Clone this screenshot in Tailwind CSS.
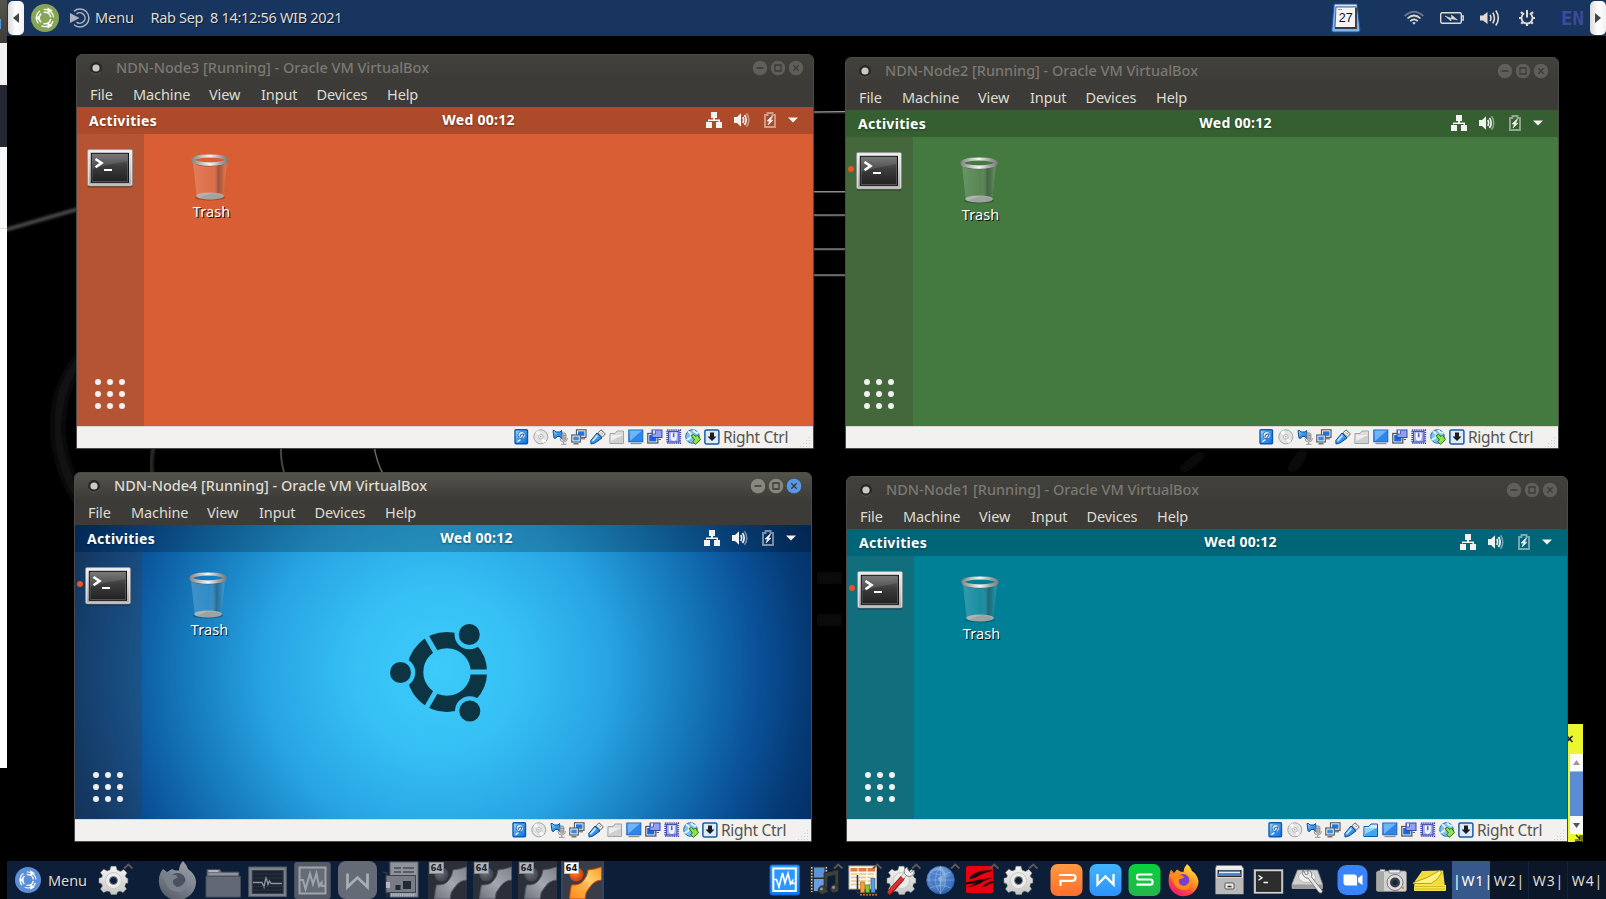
<!DOCTYPE html>
<html lang="en">
<head>
<meta charset="utf-8">
<title>Desktop</title>
<script src="https://cdn.jsdelivr.net/npm/@tailwindcss/browser@4"></script>
</head>
<body class="bg-black overflow-hidden">

<!-- Shared gradients and icon symbols -->
<svg width="0" height="0" class="absolute">
  <defs>
    <linearGradient id="g-blue" x1="0" y1="0" x2="1" y2="1"><stop offset="0" stop-color="#a9dbfb"/><stop offset=".5" stop-color="#3d99ec"/><stop offset="1" stop-color="#0b6fe0"/></linearGradient>
    <linearGradient id="g-steel" x1="0" y1="0" x2="0" y2="1"><stop offset="0" stop-color="#f4f4f4"/><stop offset="1" stop-color="#a9a9a9"/></linearGradient>
    <linearGradient id="g-screen" x1="0" y1="0" x2="0" y2="1"><stop offset="0" stop-color="#6a6a6a"/><stop offset=".45" stop-color="#3c3c3c"/><stop offset="1" stop-color="#222"/></linearGradient>
    <linearGradient id="g-rim" x1="0" y1="0" x2="1" y2="0"><stop offset="0" stop-color="#8b8b8b"/><stop offset=".2" stop-color="#b5b5b0"/><stop offset=".5" stop-color="#f6f6f6"/><stop offset=".8" stop-color="#a5a5a5"/><stop offset="1" stop-color="#808080"/></linearGradient>
    <linearGradient id="g-glass" x1="0" y1="0" x2="1" y2="0"><stop offset="0" stop-color="#fff" stop-opacity=".2"/><stop offset=".55" stop-color="#fff" stop-opacity=".1"/><stop offset=".75" stop-color="#444" stop-opacity=".38"/><stop offset=".85" stop-color="#666" stop-opacity=".25"/><stop offset="1" stop-color="#fff" stop-opacity=".15"/></linearGradient>
    <linearGradient id="g-orange" x1="0" y1="1" x2="1" y2="0"><stop offset="0" stop-color="#ff8a1c"/><stop offset=".45" stop-color="#ffb347"/><stop offset=".6" stop-color="#ffd070"/><stop offset="1" stop-color="#ff9c1e"/></linearGradient>
    <linearGradient id="g-gray" x1="0" y1="1" x2="1" y2="0"><stop offset="0" stop-color="#6d727b"/><stop offset=".5" stop-color="#a3a8b0"/><stop offset="1" stop-color="#7d828b"/></linearGradient>
    <linearGradient id="g-gear" x1="0" y1="0" x2="0" y2="1"><stop offset="0" stop-color="#f4f4f2"/><stop offset="1" stop-color="#c6c8c6"/></linearGradient>
    <linearGradient id="g-vb" x1="0" y1="0" x2="0" y2="1"><stop offset="0" stop-color="#3aa5ff"/><stop offset="1" stop-color="#1279ee"/></linearGradient>
    <linearGradient id="g-p" x1="0" y1="0" x2="0" y2="1"><stop offset="0" stop-color="#ff9a42"/><stop offset="1" stop-color="#ff6e2e"/></linearGradient>
    <linearGradient id="g-w" x1="0" y1="0" x2="0" y2="1"><stop offset="0" stop-color="#42b4fb"/><stop offset="1" stop-color="#2e92ff"/></linearGradient>
    <linearGradient id="g-s" x1="0" y1="0" x2="0" y2="1"><stop offset="0" stop-color="#05d23c"/><stop offset="1" stop-color="#26b54c"/></linearGradient>
    <linearGradient id="g-ff" x1=".8" y1="0" x2=".2" y2="1"><stop offset="0" stop-color="#fff04a"/><stop offset=".4" stop-color="#ff9a1e"/><stop offset=".75" stop-color="#ff3b46"/><stop offset="1" stop-color="#e31587"/></linearGradient>
    <linearGradient id="g-ffg" x1=".8" y1="0" x2=".2" y2="1"><stop offset="0" stop-color="#9ba1aa"/><stop offset=".5" stop-color="#7c828c"/><stop offset="1" stop-color="#555b67"/></linearGradient>
    <radialGradient id="g-globe" cx=".4" cy=".3" r=".7"><stop offset="0" stop-color="#9cc4f0"/><stop offset="1" stop-color="#2e63b2"/></radialGradient>
    <radialGradient id="g-ballr" cx=".4" cy=".4" r=".6"><stop offset="0" stop-color="#ff7d2a"/><stop offset="1" stop-color="#d93a00"/></radialGradient>
    <radialGradient id="g-ballg" cx=".4" cy=".4" r=".6"><stop offset="0" stop-color="#6a6f78"/><stop offset="1" stop-color="#3f444d"/></radialGradient>
    <filter id="f-soft" x="-50%" y="-50%" width="200%" height="200%"><feGaussianBlur stdDeviation="1.6"/></filter>
    <filter id="f-wide" x="-80%" y="-50%" width="260%" height="200%"><feGaussianBlur stdDeviation="5"/></filter>
    <mask id="m-cof">
      <circle cx="50" cy="50" r="31.900" fill="none" stroke="#fff" stroke-width="16.400"/>
      <g stroke="#000" stroke-width="5"><path d="M50 50H95M50 50L27.500 11.030M50 50L27.500 88.970"/></g>
      <circle cx="3.500" cy="50.500" r="14.800" fill="#000"/><circle cx="72.300" cy="12.500" r="14.800" fill="#000"/><circle cx="72.800" cy="89" r="14.800" fill="#000"/>
    </mask>
  </defs>

  <symbol id="cof" viewBox="-10 -5 110 110">
    <rect x="-10" y="-5" width="110" height="110" fill="#0d3442" mask="url(#m-cof)"/>
    <g fill="#0d3442"><circle cx="3.500" cy="50.500" r="10.500"/><circle cx="72.300" cy="12.500" r="10.500"/><circle cx="72.800" cy="89" r="10.500"/></g>
  </symbol>

  <symbol id="mate" viewBox="0 0 28 28">
    <circle cx="14" cy="14" r="14" fill="currentColor"/>
    <g fill="none" stroke="#fff">
      <circle cx="14" cy="14" r="8.600" stroke-width="1.300" stroke-dasharray="14 4" stroke-dashoffset="-3"/>
      <circle cx="14" cy="14" r="5.800" stroke-width="1.500" stroke-dasharray="9.500 2.600" stroke-dashoffset="-1"/>
    </g>
    <path d="M4 14L9 11.200V16.800ZM16.500 3.500L21.500 6.600L16.500 9.400ZM16.500 18.600L21.500 21.600L16.500 24.500Z" fill="#fff"/>
  </symbol>

  <symbol id="terminal" viewBox="0 0 46 39">
    <rect x=".5" y="1" width="45" height="37.500" rx="1.500" fill="#000" opacity=".35"/>
    <rect x=".5" y=".5" width="45" height="36.500" rx="1.500" fill="url(#g-steel)" stroke="#8e8e8e" stroke-width=".6"/>
    <rect x="1.500" y="1.500" width="43" height="34.500" rx="1" fill="none" stroke="#e4e4e4" stroke-width=".8"/>
    <rect x="3.800" y="3.800" width="38.200" height="30" fill="#0b0b0b"/>
    <rect x="5" y="5" width="35.800" height="27.500" fill="url(#g-screen)" stroke="#7c7c7c" stroke-width=".6"/>
    <path d="M5.500 5.500H40.500V12Q22 15 5.500 20Z" fill="#fff" opacity=".1"/>
    <path d="M8.500 10L14.500 14L8.500 18.300" fill="none" stroke="#fff" stroke-width="2.600"/>
    <path d="M17 21H25" stroke="#fff" stroke-width="2"/>
  </symbol>

  <symbol id="trash" viewBox="0 0 38 47">
    <ellipse cx="19" cy="43.500" rx="15" ry="3" fill="#000" opacity=".25"/>
    <path d="M2 8L5.500 41Q19 48 32.500 41L36 8Z" fill="url(#g-glass)"/>
    <ellipse cx="19" cy="42" rx="13.800" ry="3.600" fill="#b5b9b6" opacity=".92"/>
    <path d="M9 44Q18 38 26 39.500L32 42Q30 46 19 45.500Z" fill="#888" opacity=".35"/>
    <ellipse cx="19" cy="6" rx="17" ry="4" fill="none" stroke="url(#g-rim)" stroke-width="3.200"/>
    <path d="M1 6.500Q3 12 19 12T37 6.500" fill="none" stroke="#5d5d5d" stroke-width=".8"/>
    <path d="M1.500 7Q6 10.500 19 10.500T36.500 7" fill="none" stroke="url(#g-rim)" stroke-width="2.600"/>
  </symbol>

  <symbol id="net" viewBox="0 0 16 16"><path fill="currentColor" d="M5 0h6v6H9v1.500h5V10h2v6h-6v-6h2.500V9h-10v1H6v6H0v-6h2V7.500h5V6H5z"/></symbol>
  <symbol id="vol" viewBox="0 0 16 16"><path fill="currentColor" d="M0 5H3L7 1.200V14.800L3 11H0Z"/><g fill="none" stroke="currentColor"><path d="M8.800 5Q10.600 8 8.800 11" stroke-width="1.600"/><path d="M10.500 3Q13.800 8 10.500 13" stroke-width="1.700"/><path class="opacity-(--wave)" d="M12.600 1.200Q17 8 12.600 14.800" stroke-width="1.600"/></g></symbol>
  <symbol id="bat" viewBox="0 0 12 16"><path d="M1 3H3.500V1H8.500V3H11V15H1Z" fill="none" stroke="currentColor" stroke-width="1.900" opacity=".5"/><path d="M7.500 4.500L3 9H5.500L4 13L9 8.200H6.500L8.500 4.500Z" fill="currentColor" stroke="currentColor" stroke-width=".6"/></symbol>

  <!-- Status bar icons, 16 x 16 -->
  <symbol id="s-hd" viewBox="0 0 16 16"><rect x="1" y=".8" width="12.500" height="14" rx="1" fill="url(#g-blue)" stroke="#0a5bb0" stroke-width="1.400"/><circle cx="7.800" cy="6.200" r="3.700" fill="#e8f4fe" stroke="#2a75c0" stroke-width=".9"/><path d="M6 8Q6 5.500 8.500 5T9 7.500L4.500 12.500" fill="none" stroke="#1c63b4" stroke-width="1.100"/><path d="M3.500 12.800L6.500 10.500" stroke="#fff" stroke-width="1.300"/></symbol>
  <symbol id="s-cd" viewBox="0 0 16 16"><circle cx="7.800" cy="7.800" r="7" fill="#e3e3e3" stroke="#a5a5a5"/><path d="M7.800 7.800L2.500 3.500A7 7 0 0 1 6 1.300ZM7.800 7.800L13 12A7 7 0 0 1 10 14.300Z" fill="#fafafa"/><circle cx="7.800" cy="7.800" r="2.300" fill="#fff" stroke="#aaa" stroke-width=".9"/><circle cx="7.800" cy="7.800" r=".8" fill="#888"/></symbol>
  <symbol id="s-au" viewBox="0 0 16 16"><path d="M1 1.500Q3 1 4 3L8 3L9.500 1.500Q11 5 9.500 9.500L8 7.500L5 7.500Q4 10.500 2 9Z" fill="url(#g-blue)" stroke="#0c4f94"/><rect x="10" y="3.800" width="4" height="7.700" rx="2" fill="#b9b9b9" stroke="#8c8c8c" stroke-width=".8"/><path d="M8 9Q8 13 11.700 13T15.500 9M11.700 13V15M9 15.300H14.500M9.500 6.500H14M9.500 9H14" stroke="#8e8e8e" stroke-width=".9" fill="none"/></symbol>
  <symbol id="s-nw" viewBox="0 0 16 16"><rect x="5.500" y=".8" width="9.500" height="7.500" fill="#fff" stroke="#5a5a5a" stroke-width="1.200"/><rect x="7" y="2.300" width="6.500" height="4.500" fill="#1a78e6"/><path d="M10 9.800H14" stroke="#555"/><rect x=".8" y="6" width="8.500" height="7" fill="#fff" stroke="#5a5a5a" stroke-width="1.200"/><rect x="2.300" y="7.500" width="5.500" height="4" fill="#2e8cf0"/><path d="M2.500 14.800H7.500" stroke="#555" stroke-width="1.200"/></symbol>
  <symbol id="s-usb" viewBox="0 0 16 16"><path d="M1 15L.8 11.500L7 4L12 9L5 14Z" fill="url(#g-blue)" stroke="#0c4f94"/><path d="M2.500 12L7.500 6.500" stroke="#d5eafd" stroke-width="1.500"/><path d="M8 3.800L11 .8L15.300 4.800L12.500 8Z" fill="#fff" stroke="#5a5a5a"/><path d="M11 3.500L12 4.500M12.500 4.800L13 5.200" stroke="#333" stroke-width="1"/></symbol>
  <symbol id="s-fo" viewBox="0 0 16 16"><path d="M1 4.500L6 4.500L8 2H14.500V14.500H.8Z" fill="#dcdcdc" stroke="#a4a4a4"/><path d="M1.500 14L2 6H14V14Z" fill="#cfcfcf"/><path d="M2 6H14L2 12Z" fill="#eee"/></symbol>
  <symbol id="s-fb" viewBox="0 0 16 16"><path d="M1 4.500L6 4.500L8 2H14.500V14.500H.8Z" fill="#d9ecfb" stroke="#0d5aa6"/><path d="M1.500 14L2 6H14V14Z" fill="#3fa8ef"/><path d="M2 6H14L2 12Z" fill="#8fd4fb"/></symbol>
  <symbol id="s-di" viewBox="0 0 16 16"><rect x=".8" y="1" width="14" height="11.800" fill="#2f86ea" stroke="#1b63c6"/><path d="M1.500 1.500H14L2 12Z" fill="#6db6f6"/><path d="M2.500 14.500H13.500" stroke="#8a8a8a" stroke-width="1.300"/></symbol>
  <symbol id="s-re" viewBox="0 0 16 16"><rect x=".8" y="4.500" width="10" height="9.500" fill="#fff" stroke="#4d5566" stroke-width="1.300"/><rect x="2.200" y="6" width="7.200" height="6.500" fill="#1667dd"/><rect x="5" y="1" width="10" height="7.500" fill="#8fa2f2" stroke="#3a46a8"/><path d="M5.500 1.500V5H8.500V1.500" fill="#e6e9fd" stroke="#3a46a8" stroke-width=".8"/><path d="M11.500 10.500H14" stroke="#666"/></symbol>
  <symbol id="s-cp" viewBox="0 0 16 16"><rect x="1.200" y="1.200" width="13" height="13" fill="none" stroke="#3a47a6" stroke-width="1.800" stroke-dasharray="1.100 1"/><rect x="2.400" y="2.400" width="10.600" height="10.600" fill="#a3aef0" stroke="#3b49b0"/><path d="M5.500 4.500V8.500Q5.500 11 7.700 11T10 8.500V4.500Z" fill="#dfe3fd" stroke="#fff" stroke-width="1.300"/><path d="M7.700 4V8" stroke="#5a67c8" stroke-width="1.600"/></symbol>
  <symbol id="s-ms" viewBox="0 0 16 16"><circle cx="7.500" cy="7.500" r="6.800" fill="#7fc0f4" stroke="#1b6fb2"/><path d="M3 2.500Q8 5 5 9L1.500 11M8 1Q10 4 13.500 4" fill="none" stroke="#e4f6ff" stroke-width="1.900"/><path d="M6 6.500L8.500 5.500L11 7.500L12.500 6L15.500 10.500L10.500 15.300L7.500 12.500L9.500 11Z" fill="#8fe34c" stroke="#25770e"/></symbol>
  <symbol id="s-ho" viewBox="0 0 16 16"><rect x=".9" y=".9" width="14" height="14" rx="1.500" fill="#dcecfa" stroke="#1c5aa0" stroke-width="1.500"/><path d="M6 3.500H10V7.500H12.500L8 12L3.500 7.500H6Z" fill="#1c1c1c"/></symbol>

  <!-- Panel icons, 39 x 38 -->
  <symbol id="gear" viewBox="0 0 39 38"><g fill="url(#g-gear)" stroke="#8f918f" stroke-width=".5"><path d="M16 9L17 5.300H22L23 9L26.500 10.500L29.800 8.600L33 12L31 15L32.500 17L33.800 17.500V22L31.500 22.500L30.800 25.500L32.500 28L29 31.500L26 30L23.500 31L22.500 33.500H17L16 30.800L13 30L9.500 31.500L6.500 28L8.500 25L7.500 22.500L5 22V17.200L7.800 16.500L8.500 14.500L6.500 11.500L9.800 8.300L13 10Z"/></g><circle cx="19.500" cy="19.500" r="8" fill="#ecedeb" stroke="#c9cac8"/></symbol>
  <symbol id="caret" viewBox="0 0 39 38"><path d="M30 7.500L34.300 3.500L38.500 7.500" fill="none" stroke="#5d5a54" stroke-width="1.800"/></symbol>
  <symbol id="vbpulse" viewBox="0 0 39 38"><rect x="5" y="4" width="29.500" height="30" rx="2" fill="url(#g-vb)" stroke="#0c63cf"/><rect x="8.300" y="7.500" width="22.500" height="22.500" fill="#2c97ff" stroke="#fff" stroke-width="2"/><path d="M9 18.500H11.500L14 26L17.500 12L20 22L23 12.500L25.500 23L27.500 20V22.500H30" fill="none" stroke="#fff" stroke-width="1.700"/></symbol>
  <symbol id="media" viewBox="0 0 39 38"><rect x="6" y="5.500" width="18" height="26" fill="#2d2d2d"/><rect x="10" y="6.500" width="10.500" height="10" fill="#5b93d8"/><rect x="10" y="18" width="10.500" height="12" fill="#6ba0e0"/><path d="M7.800 6V31M22.300 6V31" stroke="#ddd" stroke-width="1.400" stroke-dasharray="1.500 1.500"/><g fill="#3f3f3f" stroke="#1c1c1c" stroke-width=".6"><path d="M20 12L34.500 8.500V26H31V14L23.500 16V29H20Z"/><circle cx="18.500" cy="29" r="4.300"/><circle cx="30.500" cy="27.500" r="4.300"/></g><circle cx="17.500" cy="28" r="1.400" fill="#999"/><circle cx="29.500" cy="26.500" r="1.400" fill="#999"/></symbol>
  <symbol id="calc" viewBox="0 0 39 38"><rect x="6" y="5" width="27.500" height="23" fill="#f7f5ee" stroke="#b9b5a8"/><rect x="7.500" y="7" width="24.500" height="3.500" fill="#e07a3c"/><path d="M8 13H31M8 16.500H31M8 20H31M8 23.500H31" stroke="#e2cb8a" stroke-width="1.700"/><path d="M15 7V26M24 7V26" stroke="#fff"/><path d="M14.500 14V32H34" fill="none" stroke="#333" stroke-width="1.600"/><rect x="17.500" y="21" width="4" height="10.500" fill="#f2a23c" stroke="#b5670d" stroke-width=".6"/><rect x="22.700" y="24" width="4" height="7.500" fill="#7ccb2c" stroke="#3f7a0c" stroke-width=".6"/><rect x="28" y="17.500" width="4" height="14" fill="#5c9be6" stroke="#20549c" stroke-width=".6"/><path d="M17 33.800H34" stroke="#e68c3a" stroke-width="1.200" stroke-dasharray="2 1"/></symbol>
  <symbol id="wrench" viewBox="0 0 39 38"><path d="M7.500 31.500L20 17.500" stroke="#8d0f0f" stroke-width="5" stroke-linecap="round"/><path d="M7.500 31L20 17.500" stroke="#d93030" stroke-width="3.400" stroke-linecap="round"/><path d="M20.500 16.500L26 10.500" stroke="#999" stroke-width="4"/><path d="M20.500 16.500L26 10.500" stroke="#eee" stroke-width="2.800"/><path d="M25 6A5 5 0 1 0 32 9L28.500 11.500L26.500 9.500Z" fill="#f0f0f0" stroke="#7c7c7c" stroke-width=".9"/></symbol>
  <symbol id="globe" viewBox="0 0 39 38"><circle cx="19.500" cy="19" r="13.800" fill="url(#g-globe)" stroke="#3a6cb5" stroke-width=".8"/><path d="M10 12Q14 8 20 10L22 14L17 17L19 22L14 27Q7 22 10 12ZM24 17L31 15Q33 21 29 27L25 24Z" fill="#3f76c4" opacity=".8"/><path d="M6 19H33M19.500 5.500V32.500M9 11Q19.500 16 30 11M9 27Q19.500 22 30 27M19.500 5.500Q9 19 19.500 32.500Q30 19 19.500 5.500" fill="none" stroke="#bdd6f3" stroke-width=".7" opacity=".5"/></symbol>
  <symbol id="red" viewBox="0 0 39 38"><rect x="6" y="5" width="27" height="27" rx="1.500" fill="#ea0010"/><path d="M10.500 15Q18 8.500 33 9.500Q26 11.500 21 13.500Q15 17.500 9.500 18ZM6 21.500Q18 18.500 33 16.500Q24 19.500 20 22.500Q14 25.500 6 26.500Q13 24 16 22.200Q11 22.500 6 23.500ZM22 25.500Q27 21 33 20V22Q28 23 26 25.500Z" fill="#1a0509"/></symbol>
  <symbol id="wps-p" viewBox="0 0 39 38"><rect x="3.500" y="3" width="32" height="32" rx="7" fill="url(#g-p)"/><path d="M12 14H26Q28.500 14 28.500 16.500Q28.500 19.800 25.500 19.800H13.500V25" fill="none" stroke="#fff" stroke-width="2.200"/></symbol>
  <symbol id="wps-w" viewBox="0 0 39 38"><rect x="3.500" y="3" width="32" height="32" rx="7" fill="url(#g-w)"/><path d="M11.500 13V23.500L19.500 15.500L27.500 23.500V13" fill="none" stroke="#fff" stroke-width="2.300"/></symbol>
  <symbol id="wps-s" viewBox="0 0 39 38"><rect x="3.500" y="3" width="32" height="32" rx="7" fill="url(#g-s)"/><path d="M27.500 13.500H14Q12 13.500 12 15.500V16.500Q12 18.500 14 18.500H25.500Q27.500 18.500 27.500 20.500V21.500Q27.500 23.700 25.500 23.700H11.500" fill="none" stroke="#fff" stroke-width="2.200"/></symbol>
  <symbol id="ffox" viewBox="0 0 39 38"><path d="M23 3Q27 6 28 10Q33 13 34.500 20A15 15 0 0 1 5 24Q3.500 16 7 8.500L10 12L13 8.500Q16 11 19.500 11Q20 6 23 3Z" fill="url(#g-ff)"/><circle cx="19" cy="19.500" r="6.500" fill="#7a3fd0"/><path d="M5 14Q10 12 15 14.500Q19 13.500 20 16.500Q17 18 15 18.500Q14 23 19 25Q24.500 25 26 18Q29 27 21 29Q11 29 9 20Z" fill="#ff8a1c"/></symbol>
  <symbol id="ffoxg" viewBox="0 0 39 38"><path d="M25 0Q29 4 30 8Q37 13 38 20A18.500 18 0 0 1 1 22Q0 14 5 8L9 11L14 8Q17 10 21 9.500Q21 4 25 0Z" fill="url(#g-ffg)"/><circle cx="19.500" cy="20" r="8" fill="#4b515e"/><path d="M3 12Q9 10 14 14Q18 13 20 16Q17 18 15 19Q14 23 19 26Q26 25 28 18Q31 28 21 31Q10 31 7 20Z" fill="#7a808b"/></symbol>
  <symbol id="cabinet" viewBox="0 0 39 38"><path d="M6.500 4.500H31.500L33.500 7.500V33H5.500V7.500Z" fill="url(#g-steel)" stroke="#777" stroke-width=".8"/><rect x="7.500" y="9" width="24" height="7" fill="#2a2a2a"/><path d="M9 9.500H30L31 15H8Z" fill="#4c82c8"/><path d="M9 11.500H30" stroke="#e6eefa" stroke-width="1.200"/><path d="M6 17H33V33H6Z" fill="#b9b9b9"/><rect x="15" y="22" width="9" height="6" rx="1" fill="#eee" stroke="#555"/><path d="M17.500 25.500H21.500" stroke="#333" stroke-width="1.600"/></symbol>
  <symbol id="smallterm" viewBox="0 0 39 38"><rect x="5" y="8.500" width="29" height="24" fill="#d4d4d4" stroke="#9a9a9a" stroke-width=".6"/><rect x="7.300" y="10.800" width="24.500" height="19.500" fill="#2c2e2e" stroke="#111" stroke-width=".8"/><path d="M9.500 14.500L13 16.800L9.500 19.300M14.500 21.500H19" fill="none" stroke="#fff" stroke-width="1.300"/></symbol>
  <symbol id="disk" viewBox="0 0 39 38"><path d="M9.500 9H29.500L34.500 23V27.500H4V23Z" fill="#d0d0d0" stroke="#888" stroke-width=".8"/><path d="M4.500 23.500H34.500V28H4.500Z" fill="#9c9c9c"/><ellipse cx="19" cy="16" rx="8.500" ry="5.500" fill="#f0f0f0" stroke="#bbb"/><path d="M15 9Q13 14 18 17L20 17L31 31.500Q34 33 34.500 30L23.500 16Q25 11 20 9V13L17.500 13.500Z" fill="#e8e8e8" stroke="#777" stroke-width=".9"/></symbol>
  <symbol id="zoomapp" viewBox="0 0 39 38"><rect x="4.500" y="4" width="30" height="30" rx="9" fill="#3a84fa"/><path d="M10.500 13.500H21Q24 13.500 24 16.500V24.500H13.500Q10.500 24.500 10.500 21.500ZM25 17L29.500 13.800V24L25 21Z" fill="#fff"/></symbol>
  <symbol id="camera" viewBox="0 0 39 38"><rect x="4.500" y="10" width="30" height="20.500" rx="2" fill="#d2d2d0" stroke="#858585" stroke-width=".8"/><rect x="4.500" y="11" width="7.500" height="19" fill="#a9a9a7"/><path d="M8 10V8.500H13V10M17 9H28V12H17Z" fill="#eee" stroke="#777" stroke-width=".7"/><circle cx="23" cy="21.500" r="8" fill="#dedede" stroke="#777"/><circle cx="23" cy="21.500" r="5" fill="#3a3d45"/><circle cx="23" cy="21.500" r="2.500" fill="#16233f"/><circle cx="31" cy="27" r="1.200" fill="#e68b22"/></symbol>
  <symbol id="notes" viewBox="0 0 39 38"><path d="M11 10L32 9.500L34.500 30H3L4 20Z" fill="#f2dc3c"/><path d="M3 29.500L3.500 23L35 24V29.500Z" fill="#f7e64f"/><path d="M2.500 21.500Q16 18 28.500 9.500L30.500 12Q27 19 20 22.500L2 22.500Z" fill="#fff37e" stroke="#ab930c" stroke-width=".8"/><path d="M4 25.500H34M4 28H34" stroke="#c8af18" stroke-width=".8"/></symbol>

  <!-- Task list icons -->
  <symbol id="t-folder" viewBox="0 0 39 38"><path d="M4 8.500H17L18.500 11H36V36H3.500Z" fill="#6d737e" stroke="#444a56" stroke-width=".8"/><path d="M5.500 10H15.500" stroke="#b0b4bb" stroke-width="2"/><path d="M5.500 13H35" stroke="#a3a8b0" stroke-width="1.200"/><rect x="3" y="15.500" width="34.500" height="20.500" fill="#636974" stroke="#474d59" stroke-width=".8"/></symbol>
  <symbol id="t-mon" viewBox="0 0 39 38"><rect x=".8" y="6" width="37.500" height="29.500" fill="#7c818b" stroke="#555a65"/><rect x="4.200" y="9.500" width="31" height="23" fill="#1b2331" stroke="#39404e"/><path d="M5 21.500H14L16 26L18 16L20 23.500L21.500 20L23 22.500H34" fill="none" stroke="#8d939d" stroke-width="1.300"/><path d="M5 13H34M5 17H34M5 25.500H34M5 29H34" stroke="#343c4b" stroke-width=".6"/></symbol>
  <symbol id="t-vb" viewBox="0 0 39 38"><rect x="1.200" y="1" width="36.500" height="37" rx="3" fill="#555b66"/><rect x="6.500" y="6.500" width="26" height="26" fill="#666c77" stroke="#9fa4ac" stroke-width="2"/><path d="M7 19H10L12.500 28L17 12.500L20 23L23.500 12.500L26 25L28.500 21.500V25H32" fill="none" stroke="#9fa4ac" stroke-width="2"/></symbol>
  <symbol id="t-w" viewBox="0 0 39 38"><rect x="0" y="0" width="39" height="38" rx="8" fill="#646a76"/><path d="M9.500 12.500V26L19.500 16.500L29.500 26V12.500" fill="none" stroke="#a9aeb6" stroke-width="2.700"/></symbol>
  <symbol id="t-card" viewBox="0 0 39 38"><g transform="translate(-2 0)"><rect x="9" y="1" width="28" height="35" fill="#8d929b" stroke="#5b616c"/><path d="M13 7H20M22 7H33M13 11H20M22 11H33" stroke="#454b57" stroke-width="1.500"/><path d="M2 11L6 12V36" stroke="#30363f" stroke-width="1.600" fill="none"/><rect x="5" y="14.500" width="29.500" height="17" fill="#777c86" stroke="#3e444f"/><rect x="14.500" y="24" width="5" height="5" fill="#232a36"/><rect x="22" y="20" width="8" height="8" fill="#232a36"/><rect x="5" y="21" width="4" height="6" fill="#b4b8be"/><path d="M10 34H34" stroke="#b4b8be" stroke-width="3" stroke-dasharray="1.200 1"/></g></symbol>
  <symbol id="t-64g" viewBox="0 0 39 38"><rect width="39" height="38" fill="#2a2f39"/><circle cx="13.500" cy="13.500" r="7" fill="url(#g-ballg)"/><path d="M25 9Q31 8.500 38.500 6V19Q31 19.500 27 26Q22 31 22 38H6.500Q7 30 8.500 24Q17 24.500 20.500 19.500Q24.500 15 25 9Z" fill="url(#g-gray)" stroke="#565b65"/></symbol>
  <symbol id="t-64" viewBox="0 0 39 38"><rect width="39" height="38" fill="#3a3d49"/><circle cx="13.500" cy="13.500" r="7" fill="url(#g-ballr)"/><path d="M25 9Q31 8.500 38.500 6V19Q31 19.500 27 26Q22 31 22 38H6.500Q7 30 8.500 24Q17 24.500 20.500 19.500Q24.500 15 25 9Z" fill="url(#g-orange)" stroke="#c94d08"/></symbol>
</svg>

<main class="relative w-[1606px] h-[899px] overflow-hidden bg-black font-['Noto_Sans',sans-serif] text-[14.5px] flex flex-col justify-between">

  <!-- Wallpaper light trails -->
  <svg class="absolute inset-0" width="1606" height="899" fill="none">
    <path d="M5 230L78 209" stroke="#5c5c5c" stroke-width="3" filter="url(#f-soft)"/>
    <path d="M84 355Q56 385 58 435Q62 475 84 505" stroke="#1d1d1d" stroke-width="8" filter="url(#f-wide)"/>
    <path d="M154 445Q150 458 152 476" stroke="#3a3a3a" stroke-width="3" filter="url(#f-soft)"/>
    <path d="M281 445Q280 460 285 476" stroke="#454545" stroke-width="2"/>
    <path d="M374 445Q376 461 384 476" stroke="#6a6a6a" stroke-width="1.500"/>
    <path d="M812 112.500H848M812 192H848M812 215.500H848M812 249.500H848M812 275.500H848" stroke="#333" stroke-width="2"/>
    <path d="M812 112L848 111.500M812 191.700H848M812 215H848M812 249H848M812 275H848" stroke="#a2a2a2" stroke-width="1"/>
    <path d="M814 578H845M814 620H845M1180 472L1205 452M1290 472L1305 450" stroke="#121212" stroke-width="6" filter="url(#f-wide)"/>
  </svg>

  <!-- Window peeking out at the left edge -->
  <div class="absolute left-0 top-0 w-[7px] h-[768px] flex flex-col bg-white">
    <div class="h-[43px] bg-linear-to-b from-[#55544d] to-[#3c3b37] flex items-center"><div class="w-px h-[10px] mt-1 bg-[#5294e2]"></div></div>
    <div class="h-[42px] bg-[#f2f1f0]"></div>
    <div class="h-[62px] bg-[#242832]"></div>
    <div class="h-[82px] bg-[#f7f8fb] border-b border-[#d4dbe3]"></div>
  </div>

  <!-- Sticky note peeking out at the right edge -->
  <div class="absolute left-[1568px] top-[724px] w-[15px] h-[118px] bg-[#ecf62f] flex flex-col">
    <div class="h-[30px] overflow-hidden"><svg width="15" height="30"><path d="M-1 12L4.500 18M-1 17.500L4.500 12" stroke="#222" stroke-width="1.600"/></svg></div>
    <div class="ml-[2px] h-[80px] flex flex-col bg-[#fafafa]">
      <div class="h-[18px] flex items-center justify-center border-b border-[#bbb]"><svg width="7" height="5"><path d="M0 5L3.500 0L7 5Z" fill="#999"/></svg></div>
      <div class="h-[44px] bg-[#5a8bd4]"></div>
      <div class="flex-1 flex items-center justify-center"><svg width="7" height="5"><path d="M0 0L3.500 5L7 0Z" fill="#555"/></svg></div>
    </div>
    <svg width="15" height="8"><path d="M8 1L12 5M12 1V6H7M14 1V8M7 7.500H14" stroke="#222" stroke-width="1.200" fill="none"/></svg>
  </div>

  <!-- Top panel -->
  <header class="relative ml-[7px] h-9 bg-[#18355f] flex items-center text-[#dfdbd2] [text-shadow:1px_1px_0_rgba(0,0,0,0.55)]">
    <div class="ml-px w-4 h-[34px] rounded-[5px] bg-linear-to-r from-[#d9d9d9] via-white to-[#f1f1f1] flex items-center justify-center"><svg width="6" height="10"><path d="M6 0V10L0 5Z" fill="#444"/></svg></div>
    <svg class="ml-[7px] w-7 h-7 text-[#87a556]"><use href="#mate"/></svg>
    <svg class="ml-[11px]" width="20" height="20" fill="none" stroke="#aab3c2"><path d="M4 3.200A9 9 0 1 1 4 16.800" stroke-width="1.500"/><path d="M6.500 5.800A5.300 5.300 0 1 1 6.500 14.200" stroke-width="1.500"/><path d="M0 5L9.500 10L0 15Z" fill="#aab3c2" stroke="none"/></svg>
    <span class="ml-[5px] w-[55.5px] whitespace-pre tracking-[-0.1px]">Menu</span>
    <span class="whitespace-pre tracking-[-0.32px]">Rab Sep  8 14:12:56 WIB 2021</span>
    <div class="ml-auto flex items-center">
      <svg class="mr-[43px]" width="30" height="30"><path d="M3 1H26L29 27Q29 29 27 29H2.500Q.5 29 .8 27Z" fill="#7fb0f0" stroke="#1f50a0"/><path d="M4 2.500H25.500" stroke="#d9eafd" stroke-width="1.500"/><path d="M5 4H25V25H4Z" fill="#f4f4f4" stroke="#666" stroke-width="1"/><path d="M4 25H25V5" stroke="#3a3a3a" stroke-width="1.800" fill="none"/><text x="14.800" y="19" text-anchor="middle" font-family="Liberation Sans" font-size="12.500" fill="#111" class="[text-shadow:none]">27</text><path d="M7 6.500H11" stroke="#999"/></svg>
      <svg class="mr-4" width="20" height="16" fill="none" stroke="#dfdbd2" stroke-width="1.700"><path d="M.7 6Q10-2.500 19.300 6" opacity=".4"/><path d="M3.500 8.500Q10 2.500 16.500 8.500"/><path d="M6.200 11.200Q10 7.500 13.800 11.200"/><path d="M8.300 12.800Q10 11.400 11.700 12.800L10 14.800Z" fill="#dfdbd2" stroke="none"/></svg>
      <svg class="mr-4" width="24" height="12"><rect x=".7" y=".7" width="20.600" height="10.600" rx="1.500" fill="none" stroke="#dfdbd2" stroke-width="1.400"/><path d="M21.500 4H23.200V8H21.500" fill="none" stroke="#dfdbd2" stroke-width="1.400"/><path d="M5 4L11.500 6.500V3L17.500 8L11 6.800V9Z" fill="#dfdbd2" stroke="#dfdbd2" stroke-width=".5"/></svg>
      <svg class="mr-[19px]" width="20" height="18" fill="none" stroke="#dfdbd2" stroke-width="1.600"><path d="M0 6.500H3L7.500 3V15L3 11.500H0Z" fill="#dfdbd2" stroke="none"/><path d="M10 5.800Q12 9 10 12.200M12.800 3.600Q16 9 12.800 14.400M15.800 1.500Q20.800 9 15.800 16.500"/></svg>
      <svg class="mr-[26px]" width="16" height="16" fill="none" stroke="#dfdbd2"><path d="M5.200 3.300A5.500 5.500 0 1 0 10.800 3.300" stroke-width="1.900"/><path d="M8 0V7.500" stroke-width="2"/><path d="M2 2L3.800 3.800M14 2L12.200 3.800M0 8H2.300M16 8H13.700M2.200 13.800L4 12M13.800 13.800L12 12M8 16V13.700" stroke-width="2.200"/></svg>
      <span class="mr-[6px] w-[23px] font-['DejaVu_Sans_Mono',monospace] text-[19px] font-bold leading-9 text-[#3f4a98] [text-shadow:none]">EN</span>
      <div class="w-4 h-[34px] rounded-[5px] bg-linear-to-r from-[#d9d9d9] via-white to-[#f1f1f1] flex items-center justify-center"><svg width="6" height="10"><path d="M0 0V10L6 5Z" fill="#444"/></svg></div>
    </div>
  </header>

  <div id="desk"></div>

  <!-- Bottom panel -->
  <footer class="relative ml-[7px] h-[38px] bg-[#0d1e38] flex items-center text-[#dfdbd2]">
    <svg class="ml-2 w-[26px] h-[26px] text-[#5b8fd6]"><use href="#mate"/></svg>
    <span class="ml-[7px] w-[46px] mt-px tracking-[-0.1px] [text-shadow:1px_1px_0_rgba(0,0,0,0.55)]">Menu</span>
    <div class="relative w-[39px] h-[38px]"><svg class="absolute inset-0 w-[39px] h-[38px]"><use href="#gear"/></svg><svg class="absolute inset-0 w-[39px] h-[38px]"><circle cx="19.500" cy="19.500" r="4" fill="#0d1e38" stroke="#8c8c8c"/></svg><svg class="absolute inset-0 w-[39px] h-[38px]"><use href="#caret"/></svg></div>
    <div id="tasks" class="flex ml-[25px] gap-[6px]"></div>
    <div id="launch" class="flex ml-auto items-center"></div>
    <nav class="flex h-full ml-[2px] text-[14px] leading-[39px] tracking-[0.9px]">
      <span class="w-[38px] pl-px text-center bg-[#37588a] text-white whitespace-nowrap">|W1|</span>
      <span class="w-[39px] pl-px text-center bg-[#0b1729] border-r border-[#13233c] whitespace-nowrap">W2|</span>
      <span class="w-[39px] pl-px text-center bg-[#0b1729] border-r border-[#13233c] whitespace-nowrap">W3|</span>
      <span class="w-[38px] pl-px text-center bg-[#0b1729] whitespace-nowrap">W4|</span>
    </nav>
  </footer>
</main>

<script>
const BLUE = 'bg-[radial-gradient(ellipse_415px_410px_at_362px_145px,#3ccbfa_0%,#36c0f5_20%,#27a3e2_42%,#1578ba_61%,#0a5199_77%,#053a75_89%,#032c60_100%)]';
const windows = [
  { n: 3, box: 'left-[76px] top-[54px] w-[738px] h-[395px]', bg: 'bg-[#da5e34]', dot: false, shared: '#s-fo' },
  { n: 2, box: 'left-[845px] top-[57px] w-[714px] h-[392px]', bg: 'bg-[#44793f]', dot: true, shared: '#s-fo' },
  { n: 4, box: 'left-[74px] top-[472px] w-[738px] h-[370px]', bg: BLUE, dot: true, shared: '#s-fo', active: true },
  { n: 1, box: 'left-[846px] top-[476px] w-[722px] h-[366px]', bg: 'bg-[#008097]', dot: true, shared: '#s-fb' },
];
const menu = [['File','w-[43px]'],['Machine','w-[76px]'],['View','w-[52px]'],['Input','w-[55.5px]'],['Devices','w-[70.5px]'],['Help','w-[40px]']];
const button = (fill, d) => `<svg width="16" height="16"><circle cx="8" cy="8" r="7.700" fill="${fill}" stroke="#33322e" stroke-width=".5"/><path d="${d}" fill="none" stroke="#3c3b37" stroke-width="1.300"/></svg>`;
const render = w => `
<section class="absolute ${w.box} flex flex-col rounded-t-[6px] overflow-hidden border border-[#4b4a46] bg-[#3c3b37]">
  <div class="h-[26px] shrink-0 flex items-center pl-[11.5px] pr-[9px] bg-linear-to-b ${w.active ? 'from-[#53524b] to-[#3d3c38]' : 'from-[#42413c] to-[#3c3b37]'}">
    <svg width="14" height="14"><circle cx="7" cy="7" r="6" fill="#292825"/><path d="M2 10.500A6 6 0 0 0 12 10.500" stroke="#5c5b55" fill="none"/><circle cx="7" cy="7" r="3.600" fill="#cdc8c0"/></svg>
    <h2 class="ml-[13.5px] mr-auto whitespace-nowrap font-medium tracking-[-0.02px] ${w.active ? 'text-[#dfdbd2]' : 'text-[#7b7973]'}">NDN-Node${w.n} [Running] - Oracle VM VirtualBox</h2>
    <div class="flex gap-[2px]">${button(w.active ? '#88867e' : '#5f5e59','M4.500 8H11.500')}${button(w.active ? '#88867e' : '#5f5e59','M5 5H11V11H5Z')}${button(w.active ? '#5a97e4' : '#5f5e59','M5.300 5.300L10.700 10.700M10.700 5.300L5.300 10.700')}</div>
  </div>
  <div class="h-[26px] shrink-0 flex items-center pl-[13px] text-[#dfdbd2] leading-none">${menu.map(m => `<span class="${m[1]} tracking-[-0.1px]">${m[0]}</span>`).join('')}</div>
  <div class="flex-1 min-h-0 flex flex-col ${w.bg}">
    <div class="h-[27px] shrink-0 bg-black/21 grid grid-cols-[67px_1fr] items-center text-white font-bold text-[14px] leading-[27px] [text-shadow:0_1px_2px_rgba(0,0,0,0.4)]">
      <span class="pl-3 whitespace-nowrap tracking-[0.3px]">Activities</span>
      <span class="col-start-2 row-start-1 text-center -mt-[2px] tracking-[0.25px]">Wed 00:12</span>
      <div class="col-start-2 row-start-1 justify-self-end flex items-center -mt-px pr-[15px] text-[#f2f2f2]">
        <svg class="w-4 h-4 mr-[12.500px]"><use href="#net"/></svg>
        <svg class="w-4 h-4 mr-[14px] [--wave:0.45]"><use href="#vol"/></svg>
        <svg class="w-[12px] h-4 mr-3"><use href="#bat"/></svg>
        <svg width="10" height="6"><path d="M0 .5H10L5 5.500Z" fill="#f2f2f2"/></svg>
      </div>
    </div>
    <div class="flex-1 min-h-0 flex relative">
      <aside class="w-[67px] relative bg-[#443830]/25 flex flex-col justify-between items-center pt-[15px] pb-[17px] pr-px">
        <svg class="w-[46px] h-[39px]"><use href="#terminal"/></svg>
        ${w.dot ? '<i class="absolute left-[2px] top-[29px] w-[6px] h-[6px] rounded-full bg-[#e95420]"></i>' : ''}
        <div class="grid grid-cols-3 gap-[6px]">${'<i class="w-[6px] h-[6px] rounded-full bg-[#f0f0f0]"></i>'.repeat(9)}</div>
      </aside>
      <div class="ml-[41px] pt-[20px] flex flex-col items-center w-[50px] h-fit">
        <svg class="w-[38px] h-[47px]"><use href="#trash"/></svg>
        <span class="ml-[3px] text-white leading-5 tracking-[0.1px] [text-shadow:1px_1px_0_rgba(0,0,0,0.9)]">Trash</span>
      </div>
      ${w.active ? '<svg class="absolute left-[312px] top-[65px] w-[110px] h-[110px]"><use href="#cof"/></svg>' : ''}
    </div>
  </div>
  <div class="h-[22px] shrink-0 bg-[#f2f1f0] border-t border-[#dcd9d5] flex items-center justify-end gap-[3px] pr-[2px] text-[#55544f] text-[15.5px] leading-none">
    ${['#s-hd','#s-cd','#s-au','#s-nw','#s-usb',w.shared,'#s-di','#s-re','#s-cp','#s-ms','#s-ho'].map(i => `<svg class="w-4 h-4 -mt-px"><use href="${i}"/></svg>`).join('')}
    <span class="w-[74px] whitespace-nowrap tracking-[-0.3px]">Right Ctrl</span>
    <svg width="11" height="11" class="self-end" fill="#cfccc8"><path d="M9 0h1v1H9zM6 3h1v1H6zM9 3h1v1H9zM3 6h1v1H3zM6 6h1v1H6zM9 6h1v1H9zM0 9h1v1H0zM3 9h1v1H3zM6 9h1v1H6zM9 9h1v1H9z"/></svg>
  </div>
</section>`;
document.getElementById('desk').innerHTML = windows.map(render).join('');

const layer = id => `<svg class="absolute inset-0 w-[39px] h-[38px]"><use href="${id}"/></svg>`;
const hole = '<svg class="absolute inset-0 w-[39px] h-[38px]"><circle cx="19.500" cy="19.500" r="4" fill="#0d1e38" stroke="#8c8c8c"/></svg>';
const badge = {
  '#t-64g': `<span class="absolute left-px top-px w-[15px] h-[12px] bg-[#b1b5bb] border border-[#80858e] text-[#22262e] font-['DejaVu_Sans'] font-bold text-[8.5px] leading-[10px] text-center">64</span>`,
  '#t-64': `<span class="absolute left-px top-px w-[15px] h-[12px] bg-white border border-[#bbb] text-[#111] font-['DejaVu_Sans'] font-bold text-[8.5px] leading-[10px] text-center">64</span>`,
};
document.getElementById('tasks').innerHTML = ['#ffoxg','#t-folder','#t-mon','#t-vb','#t-w','#t-card','#t-64g','#t-64g','#t-64g','#t-64']
  .map((id, i) => `<div class="relative w-[39px] h-[38px] ${i === 9 ? 'border-x-2 border-[#36455c] box-content -ml-[2px]' : ''}">${layer(id)}${badge[id] || ''}</div>`).join('');
document.getElementById('launch').innerHTML = [
  [['#vbpulse'],['#media','#caret'],['#calc','#caret'],['#gear','#wrench','#caret'],['#globe','#caret'],['#red','#caret'],['#gear','hole','#caret']],
  [['#wps-p'],['#wps-w'],['#wps-s'],['#ffox']],
  [['#cabinet'],['#smallterm'],['#disk']],
  [['#zoomapp'],['#camera'],['#notes']],
].map((g, i) => `<div class="flex ${['','ml-[9px]','ml-[7px]','ml-[6px]'][i]}">${g.map(ids => `<div class="relative w-[39px] h-[38px]">${ids.map(id => id === 'hole' ? hole : layer(id)).join('')}</div>`).join('')}</div>`).join('');
</script>
</body>
</html>
